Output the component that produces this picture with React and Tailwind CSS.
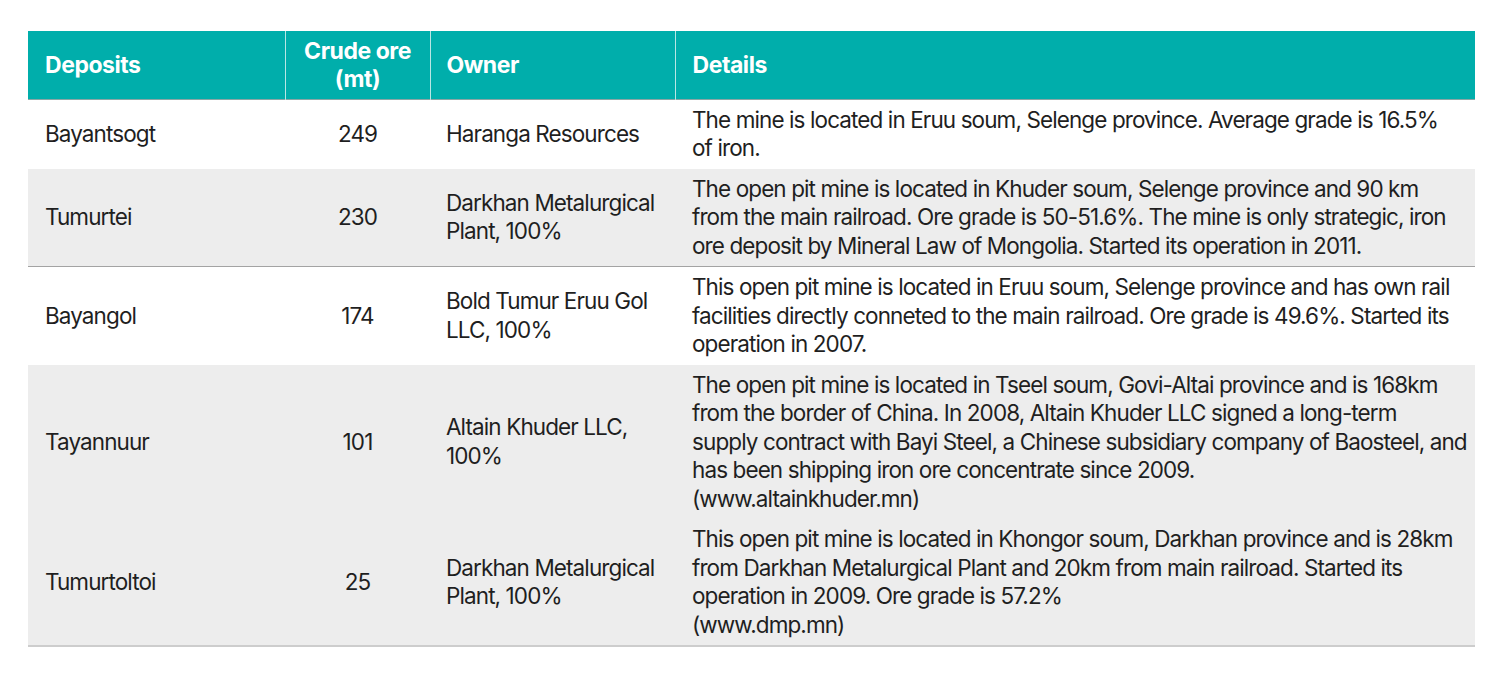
const rows = [
  {
    name: "Bayantsogt",
    ore: "249",
    owner: ["Haranga Resources"],
    details: [
      "The mine is located in Eruu soum, Selenge province. Average grade is 16.5%",
      "of iron.",
    ],
    gray: false,
    line: false,
  },
  {
    name: "Tumurtei",
    ore: "230",
    owner: ["Darkhan Metalurgical", "Plant, 100%"],
    details: [
      "The open pit mine is located in Khuder soum, Selenge province and 90 km",
      "from the main railroad. Ore grade is 50-51.6%. The mine is only strategic, iron",
      "ore deposit by Mineral Law of Mongolia. Started its operation in 2011.",
    ],
    gray: true,
    line: true,
  },
  {
    name: "Bayangol",
    ore: "174",
    owner: ["Bold Tumur Eruu Gol", "LLC, 100%"],
    details: [
      "This open pit mine is located in Eruu soum, Selenge province and has own rail",
      "facilities directly conneted to the main railroad. Ore grade is 49.6%. Started its",
      "operation in 2007.",
    ],
    gray: false,
    line: false,
  },
  {
    name: "Tayannuur",
    ore: "101",
    owner: ["Altain Khuder LLC,", "100%"],
    details: [
      "The open pit mine is located in Tseel soum, Govi-Altai province and is 168km",
      "from the border of China. In 2008, Altain Khuder LLC signed a long-term",
      "supply contract with Bayi Steel, a Chinese subsidiary company of Baosteel, and",
      "has been shipping iron ore concentrate since 2009.",
      "(www.altainkhuder.mn)",
    ],
    gray: true,
    line: false,
  },
  {
    name: "Tumurtoltoi",
    ore: "25",
    owner: ["Darkhan Metalurgical", "Plant, 100%"],
    details: [
      "This open pit mine is located in Khongor soum, Darkhan province and is 28km",
      "from Darkhan Metalurgical Plant and 20km from main railroad. Started its",
      "operation in 2009. Ore grade is 57.2%",
      "(www.dmp.mn)",
    ],
    gray: true,
    line: false,
  },
];

function Lines({ items }) {
  return items.map((t, i) => (
    <span key={i} className="block whitespace-nowrap">
      {t}
    </span>
  ));
}

export default function App() {
  return (
    <div className="min-h-[676px] bg-white px-[28px] pt-[31px] font-['Inter','Liberation_Sans',sans-serif]">
      <table className="w-[1447px] table-fixed border-collapse text-[22.5px] tracking-[-0.04em] text-[#1f1f1f]">
        <colgroup>
          <col className="w-[257px]" />
          <col className="w-[145px]" />
          <col className="w-[245px]" />
          <col className="w-[800px]" />
        </colgroup>
        <thead>
          <tr className="h-[68px] bg-[#00aeab] text-left text-[23px] font-bold leading-[28px] tracking-[-0.02em] text-white border-b border-[#8aa6a5]">
            <th className="pl-[17px] font-bold">Deposits</th>
            <th className="border-l border-[#b9e6e4] text-center font-bold">
              Crude ore
              <br />
              (mt)
            </th>
            <th className="border-l border-[#b9e6e4] pl-[16px] font-bold">Owner</th>
            <th className="border-l border-[#b9e6e4] pl-[17px] font-bold">Details</th>
          </tr>
        </thead>
        <tbody className="leading-[28.5px]">
          {rows.map((r, i) => (
            <tr
              key={r.name}
              className={`${r.gray ? "bg-[#ededed]" : "bg-white"} ${
                r.line ? "border-b border-[#a3a3a3]" : ""
              } ${i === rows.length - 1 ? "border-b-2 border-[#cdcdcd]" : ""}`}
            >
              <td className="py-[6px] pl-[17px] align-middle">{r.name}</td>
              <td className="py-[6px] text-center align-middle">{r.ore}</td>
              <td className="py-[6px] pl-[16px] align-middle">
                <Lines items={r.owner} />
              </td>
              <td className="py-[6px] pl-[17px] align-middle">
                <Lines items={r.details} />
              </td>
            </tr>
          ))}
        </tbody>
      </table>
    </div>
  );
}
